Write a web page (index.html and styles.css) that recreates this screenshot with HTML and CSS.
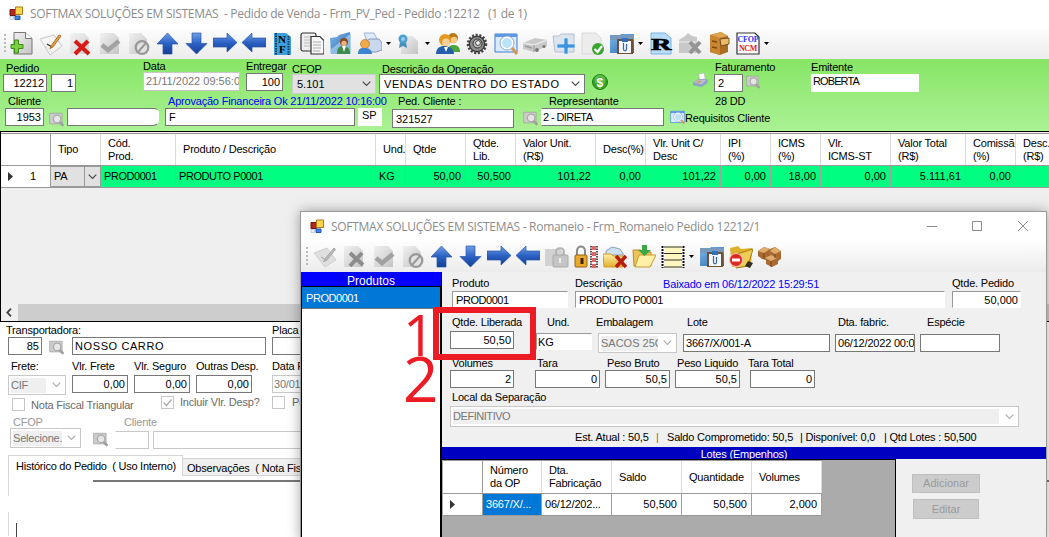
FILE: index.html
```html
<!DOCTYPE html>
<html lang="pt-BR">
<head>
<meta charset="utf-8">
<title>Pedido de Venda</title>
<link rel="stylesheet" href="styles.css">
</head>
<body>
<svg class="sprite" aria-hidden="true">
  <defs>
    <linearGradient id="blue" x1="0" y1="0" x2="0" y2="1"><stop offset="0" stop-color="#6f9fe6"/><stop offset=".5" stop-color="#2c62c4"/><stop offset="1" stop-color="#123f94"/></linearGradient>
    <linearGradient id="fold" x1="0" y1="0" x2="1" y2="1"><stop offset="0" stop-color="#7fb8e8"/><stop offset="1" stop-color="#2766b0"/></linearGradient>
    <linearGradient id="gold" x1="0" y1="0" x2="0" y2="1"><stop offset="0" stop-color="#fff0a8"/><stop offset="1" stop-color="#e3b02e"/></linearGradient>
    <linearGradient id="gry" x1="0" y1="0" x2="1" y2="1"><stop offset="0" stop-color="#f1f1f1"/><stop offset="1" stop-color="#c4c4c4"/></linearGradient>
  </defs>
  <symbol id="app" viewBox="0 0 14 14"><path d="M1 3.500h5.500v6H1z" fill="#b3261a" stroke="#6d1710"/><path d="M6.500 1h7v7.500h-7z" fill="#ffd34a" stroke="#a87a18"/><path d="M6 10h5v3.500H6z" fill="#3f82e8" stroke="#1e56ad"/><path d="M1 10.500h3.500v3H1z" fill="#e8eefa" stroke="#a6b4cc" stroke-width=".6"/></symbol>
  <symbol id="new" viewBox="0 0 24 24"><path d="M4 .5h11.500l6.500 6V22H4z" fill="url(#gry)" stroke="#777"/><path d="M15.500.5v6H22" fill="#fff" stroke="#777"/><path d="M4.500 8h4v4.500H13v4H8.500V21h-4v-4.500H1v-4h3.500z" fill="#79cf3e" stroke="#398a17"/></symbol>
  <symbol id="edit" viewBox="0 0 24 24"><path d="M1 7l14-4 8 11-12 9z" fill="#f6f6f6" stroke="#c6c6c6"/><path d="M1 7l3 5 9 8" fill="none" stroke="#ddd"/><path d="M8 12l5 3" stroke="#333" stroke-width="1.300"/><path d="M12 14L20 3l2 1-8 11-3 1.500z" fill="#eda546" stroke="#9a5212" stroke-width=".8"/></symbol>
  <symbol id="editg" viewBox="0 0 24 24"><path d="M1 8l13-5 9 12-11 7z" fill="#dedede" stroke="#cfcfcf"/><path d="M8 12l5 3M12 14L21 3l1.500 1.500-9 11-3 1z" fill="#bbb" stroke="#a5a5a5"/></symbol>
  <symbol id="del" viewBox="0 0 24 24"><path d="M2 1h14l5 5v16H2z" fill="url(#gry)" opacity=".75"/><path d="M7 9l14 13M20 9L7 22" stroke="#d51c16" stroke-width="4"/></symbol>
  <symbol id="delg" viewBox="0 0 24 24"><path d="M2 1h14l5 5v16H2z" fill="url(#gry)"/><path d="M8 8l13 12M20 8L8 21" stroke="#8c8c8c" stroke-width="4"/></symbol>
  <symbol id="ok" viewBox="0 0 24 24"><path d="M3 1h14l5 5v16H3z" fill="url(#gry)"/><path d="M5 13l6 5L22 9" fill="none" stroke="#a2a2a2" stroke-width="4.500"/></symbol>
  <symbol id="ban" viewBox="0 0 24 24"><path d="M3 1h12l6 6v15H3z" fill="url(#gry)"/><circle cx="16" cy="15.500" r="6.300" fill="#e2e2e2" stroke="#999" stroke-width="2.300"/><path d="M12 20l8-9" stroke="#999" stroke-width="2"/></symbol>
  <symbol id="up" viewBox="0 0 24 24"><path d="M12.500 1L23 12h-6v10H8V12H2z" fill="url(#blue)" stroke="#2856ab" stroke-width=".7"/></symbol>
  <symbol id="down" viewBox="0 0 24 24"><path d="M12.500 22L23 11.500h-6V1H8v10.500H2z" fill="url(#blue)" stroke="#2856ab" stroke-width=".7"/></symbol>
  <symbol id="right" viewBox="0 0 24 24"><path d="M24 10.500L14 1v5H0v9h14v5z" fill="url(#blue)" stroke="#2856ab" stroke-width=".7"/></symbol>
  <symbol id="left" viewBox="0 0 24 24"><path d="M0 10.500L10 1v5h14v9H10v5z" fill="url(#blue)" stroke="#2856ab" stroke-width=".7"/></symbol>
  <symbol id="nf" viewBox="0 0 24 24"><path d="M3 1h12l5 4v18H3z" fill="#3d9ede"/><path d="M5 1v22M17.500 4v19" stroke="#143850" stroke-width="2" stroke-dasharray="1.500 1"/><text x="7" y="11" class="ic-nf">N</text><text x="8" y="21" class="ic-nf">F</text></symbol>
  <symbol id="pages" viewBox="0 0 24 24"><rect x="1" y="1" width="15" height="18" rx="2" fill="#eee" stroke="#333" stroke-width="1.200"/><path d="M4 5h8M4 8h6M4 11h6M4 14h6" stroke="#bbb"/><path d="M11 4.500h9l4 4V22H11z" fill="#f7f7f7" stroke="#333" stroke-width="1.200"/><path d="M13 10h8M13 13h8M13 16h8M13 19h7" stroke="#aaa"/></symbol>
  <symbol id="person" viewBox="0 0 24 24"><path d="M1 6l7-1 2-2 11-3v22H2z" fill="url(#fold)"/><path d="M1 18L22 1v21H2z" fill="#9bc8ee" opacity=".8"/><path d="M8 22c0-6 2-8 6-8s7 2 7 8z" fill="#3d8a4c"/><path d="M13 14l2 6 2-6z" fill="#fff"/><circle cx="15" cy="10" r="4" fill="#8a4a20"/><circle cx="15" cy="11.500" r="2.700" fill="#eab27e"/></symbol>
  <symbol id="pprint" viewBox="0 0 24 24"><path d="M6 1h10l4 8H9z" fill="#dceafa" stroke="#9eb6d4"/><path d="M8 9l4-2h9l3 4v7l-6 2H8z" fill="#c9d8ee" stroke="#8798b8"/><circle cx="7" cy="12" r="4.500" fill="#edaa4c" stroke="#b56b18" stroke-width=".6"/><path d="M0 22c0-5 2-6 6-6s8 1 8 6z" fill="#3f83d0"/></symbol>
  <symbol id="cert" viewBox="0 0 24 24"><path d="M4 4h11l6 5v13H4z" fill="url(#gry)"/><path d="M3 10l-1 6 4-2 4 2-1-6z" fill="#4a8fb8"/><circle cx="6" cy="7" r="4.500" fill="#4a9fd0"/><circle cx="6" cy="7" r="2" fill="#9ccbe5"/></symbol>
  <symbol id="users" viewBox="0 0 24 24"><circle cx="17" cy="6" r="5" fill="#b97918"/><circle cx="18" cy="8" r="3.300" fill="#f5c988"/><path d="M12 20c0-6 2-7 6-7s6 3 6 7z" fill="#4aa63c"/><circle cx="9" cy="8" r="6" fill="#e2991e"/><circle cx="10" cy="10.500" r="3.900" fill="#f8cf94"/><path d="M0 22c0-6 4-8 8-8s10 2 10 8z" fill="#245fae"/><path d="M8 15l2 5 2-5z" fill="#fff"/></symbol>
  <symbol id="gear" viewBox="0 0 24 24"><circle cx="12" cy="12" r="8.500" fill="#777" stroke="#444" stroke-width="3.500" stroke-dasharray="2 1.500"/><circle cx="12" cy="12" r="7.500" fill="#8c8c8c" stroke="#333"/><circle cx="12.500" cy="11.500" r="4.500" fill="#bbb" stroke="#333" stroke-width="1"/><circle cx="13" cy="11" r="2.400" fill="#f4f4f4" stroke="#444"/></symbol>
  <symbol id="find" viewBox="0 0 24 24"><path d="M1 2h22v18H1z" fill="#d9ecfd" stroke="#3c7ed4"/><path d="M1 2h22v3H1z" fill="#5a97e6"/><circle cx="13" cy="11" r="6" fill="#b8e3f8" stroke="#fff" stroke-width="2"/><circle cx="13" cy="11" r="7" fill="none" stroke="#90a8c4"/><path d="M18 16l5 6" stroke="#d19a50" stroke-width="3"/></symbol>
  <symbol id="findg" viewBox="0 0 24 24"><path d="M1 2h20v17H1z" fill="#ccc" stroke="#999"/><circle cx="13" cy="11" r="6" fill="#e6e6e6" stroke="#aaa" stroke-width="2"/><path d="M17 16l6 6" stroke="#a0a0a0" stroke-width="4"/></symbol>
  <symbol id="truck" viewBox="0 0 24 24"><path d="M0 11l12-5 12 2v6l-13 6-11-3z" fill="#c9c9c9"/><path d="M0 11l11 2 13-5" fill="none" stroke="#e6e6e6" stroke-width="1.500"/><path d="M11 13v7" stroke="#999"/><path d="M2 14l7 2" stroke="#999" stroke-width="1.500"/><circle cx="14" cy="18" r="1.900" fill="#777"/><circle cx="21" cy="14.500" r="1.600" fill="#777"/></symbol>
  <symbol id="fplus" viewBox="0 0 24 24"><path d="M1 4h6l2-2h13v18H3z" fill="#dbe4ef" stroke="#b4c0d0"/><path d="M12 6h4v6h7v4h-7v6h-4v-6H5v-4h7z" fill="#3f93dc" stroke="#d9efff" stroke-width=".7"/></symbol>
  <symbol id="pok" viewBox="0 0 24 24"><path d="M1 1h14l5 5v16H1z" fill="#ececec" stroke="#d8d8d8"/><circle cx="17" cy="17" r="6" fill="#38a52d"/><path d="M13.500 17l3 3 4.500-6" fill="none" stroke="#fff" stroke-width="2.200"/></symbol>
  <symbol id="clip" viewBox="0 0 24 24"><path d="M0 3h10l1-1h13v19H0z" fill="url(#fold)"/><path d="M0 3h24v5H0z" fill="#769abe"/><path d="M7 7h16v15H7z" fill="#6d5238"/><path d="M9 9h12v12H9z" fill="#f5f8ff"/><path d="M12 6h6v4h-6z" fill="#2f6fc0"/><path d="M13.500 11v6c0 2.500 3 2.500 3 0v-5" fill="none" stroke="#38649c" stroke-width="1.200"/></symbol>
  <symbol id="r" viewBox="0 0 24 24"><path d="M2 1h14l6 5v16H2z" fill="#b8dcf7" stroke="#79b4e0"/><text x="2" y="18" class="ic-r" textLength="20" lengthAdjust="spacingAndGlyphs">R</text></symbol>
  <symbol id="boxg" viewBox="0 0 24 24"><path d="M1 8l6-4 3-3 4 3 5 1v16H1z" fill="#c8c8c8"/><path d="M1 10h18" stroke="#eee"/><path d="M12 10l10 11M22 10L12 21" stroke="#949494" stroke-width="4"/></symbol>
  <symbol id="cab" viewBox="0 0 24 24"><path d="M3 3l11-3 7 4v16l-8 3-10-3z" fill="#a96c20"/><path d="M3 3l10 3v17L3 20z" fill="#c98630"/><path d="M3 3l11-3 7 4-8 2z" fill="#dca550"/><path d="M13 7l9-1v6l-8 2z" fill="#e9ba68" stroke="#6a3c0c" stroke-width=".8"/><path d="M5 9l5 1M5 15l5 1" stroke="#7b4811" stroke-width="1.500"/></symbol>
  <symbol id="cfop" viewBox="0 0 24 24"><path d="M1 1h18l4 4v17H1z" fill="#fff" stroke="#333" stroke-width="1.200"/><text x="1.500" y="9.500" class="ic-c" fill="#1c3cff" textLength="21">CFOP</text><text x="3" y="19" class="ic-c" fill="#e3161a" textLength="18">NCM</text></symbol>
  <symbol id="locg" viewBox="0 0 24 24"><path d="M0 4h15l3 3v14H0z" fill="#d2d2d2"/><path d="M11 10V7c0-5 8-5 8 0v3" fill="none" stroke="#b5b5b5" stroke-width="2"/><rect x="8" y="10" width="15" height="12" rx="1" fill="#c5c5c5" stroke="#aaa"/><path d="M15 13v5" stroke="#eee" stroke-width="2"/></symbol>
  <symbol id="lock" viewBox="0 0 24 24"><path d="M3 11V6c0-6 8-6 8 0v5" fill="none" stroke="#888" stroke-width="2"/><rect x="1" y="10" width="12" height="12" rx="1" fill="#e9a92c" stroke="#976411"/><path d="M8 13v6" stroke="#3a2508" stroke-width="3"/><path d="M17 1v22M23 1v22" stroke="#222" stroke-width="1.500" stroke-dasharray="1.500 1"/><path d="M20 1v22" stroke="#d66" stroke-width="4" stroke-dasharray="4 2"/></symbol>
  <symbol id="fdel" viewBox="0 0 24 24"><path d="M3 6l6-4 8 2 4 6H3z" fill="#cfe0ef" stroke="#8aa3bb"/><path d="M0 9h8l2 2h10v11H1z" fill="url(#gold)" stroke="#d39a20"/><path d="M13 11l10 11M23 11L13 22" stroke="#b81d12" stroke-width="3.500"/></symbol>
  <symbol id="fdown" viewBox="0 0 24 24"><path d="M1 5h8l2 2h8v14H2z" fill="#ecc557" stroke="#b88b25"/><path d="M3 22l4-12h17l-6 12z" fill="#fff0a8" stroke="#c79c35"/><path d="M10 0h5v5h4l-6.500 6L6 5h4z" fill="#39a845"/></symbol>
  <symbol id="list" viewBox="0 0 24 24"><path d="M1.500 1v22M22.500 1v22" stroke="#111" stroke-width="2" stroke-dasharray="2 1"/><path d="M4 1h16v22H4z" fill="#fdf7bf"/><path d="M3 2h18M3 8.500h18M3 15h18M3 22h18" stroke="#333" stroke-width="1"/></symbol>
  <symbol id="fno" viewBox="0 0 24 24"><path d="M1 3l8-2 3 3 11-1-1 17-19 2z" fill="#deb02c"/><path d="M8 9l16-5-5 17-12 2z" fill="#f1cc55" stroke="#a67a12"/><path d="M19 16l5 2-3 5-5-2z" fill="#342f20"/><circle cx="7" cy="15" r="6.500" fill="#db2b24" stroke="#f8c3be"/><path d="M3 15h8" stroke="#fff" stroke-width="3"/></symbol>
  <symbol id="boxes" viewBox="0 0 24 24"><path d="M0 6l6-4 6 2 5-2 6 4v8l-3 2v3l-6 3-6-3v-4l-4-1-4-3z" fill="#a96a31"/><path d="M0 6l6-4 6 2-6 4zM12 6l5-4 6 4-6 3zM7 13l6-3 6 3-6 3z" fill="#dfaa6e"/><path d="M6 8v6M17 9v4M13 16v6" stroke="#7b451b"/></symbol>
  <symbol id="money" viewBox="0 0 16 16"><circle cx="8" cy="8" r="7.500" fill="#33a429" stroke="#1d7c17"/><circle cx="8" cy="6" r="5.500" fill="#6cca5c" opacity=".6"/><text x="4.500" y="12.500" class="ic-m">$</text></symbol>
  <symbol id="calc" viewBox="0 0 16 16"><path d="M6 1l6-1 1 6-6 2z" fill="#fff" stroke="#aaa" stroke-width=".6"/><path d="M0 10l6-4 10 1-1 4-6 4-9-2z" fill="#8fa2c5"/><path d="M1 10l5-3 8 1-5 4z" fill="#b9c4da"/><path d="M3 10l3-2 4 .500-3 2.500z" fill="#cda46b"/></symbol>
  <symbol id="chev" viewBox="0 0 9 6"><path d="M.7.7L4.500 4.500 8.300.7" fill="none" stroke="currentColor" stroke-width="1.100"/></symbol>
</svg>

<main class="app">
  <header class="titlebar"><svg class="appicon"><use href="#app"/></svg><span class="title-main">SOFTMAX SOLUÇÕES EM SISTEMAS&nbsp; - Pedido de Venda - Frm_PV_Ped - Pedido :12212&nbsp;&nbsp; (1 de 1)</span></header>
  <nav class="toolbar">
    <i class="grip"></i>
    <svg><use href="#new"/></svg><svg><use href="#edit"/></svg><svg><use href="#del"/></svg><svg><use href="#ok"/></svg><svg><use href="#ban"/></svg><svg><use href="#up"/></svg><svg><use href="#down"/></svg><svg><use href="#right"/></svg><svg><use href="#left"/></svg><svg><use href="#nf"/></svg><svg><use href="#pages"/></svg><svg><use href="#person"/></svg><svg><use href="#pprint"/></svg><i class="drop"></i><svg><use href="#cert"/></svg><i class="drop"></i><svg><use href="#users"/></svg><svg><use href="#gear"/></svg><svg><use href="#find"/></svg><svg><use href="#truck"/></svg><svg><use href="#fplus"/></svg><svg><use href="#pok"/></svg><svg><use href="#clip"/></svg><i class="drop"></i><svg><use href="#r"/></svg><svg><use href="#boxg"/></svg><svg><use href="#cab"/></svg><svg><use href="#cfop"/></svg><i class="drop"></i>
  </nav>

  <section class="order">
    <div class="row row-a">
      <div class="field a-ped"><label>Pedido</label><b class="in num">12212</b></div>
      <div class="field a-seq"><label></label><b class="in num">1</b></div>
      <div class="field a-data"><label>Data</label><b class="in off">21/11/2022 09:56:00</b></div>
      <div class="field a-ent"><label>Entregar</label><b class="in num">100</b></div>
      <div class="field a-cfop"><label>CFOP</label><b class="in sel shade">5.101<svg class="chev"><use href="#chev"/></svg></b></div>
      <div class="field a-desc"><label>Descrição da Operação</label><b class="in sel wide">VENDAS DENTRO DO ESTADO<svg class="chev"><use href="#chev"/></svg></b></div>
      <svg class="a-money"><use href="#money"/></svg>
      <svg class="a-calc"><use href="#calc"/></svg>
      <div class="field a-fat"><label>Faturamento</label><b class="in">2</b></div>
      <svg class="a-find"><use href="#findg"/></svg>
      <div class="field a-emit"><label>Emitente</label><b class="in bare">ROBERTA</b></div>
    </div>
    <div class="row row-b">
      <div class="field b-cli"><label>Cliente</label><b class="in num">1953</b></div>
      <svg class="lens b-l1"><use href="#findg"/></svg>
      <div class="field b-n1"><label></label><b class="in"></b></div>
      <div class="field b-n2"><label class="info">Aprovação Financeira Ok 21/11/2022 10:16:00</label><b class="in">F</b></div>
      <div class="field b-uf"><label></label><b class="in bare">SP</b></div>
      <div class="field b-pc"><label>Ped. Cliente :</label><b class="in">321527</b></div>
      <svg class="lens b-l2"><use href="#findg"/></svg>
      <div class="field b-rep"><label>Representante</label><b class="in">2 - DIRETA</b></div>
      <svg class="lens b-l3"><use href="#find"/></svg>
      <span class="b-req">Requisitos Cliente</span>
      <span class="b-dd">28 DD</span>
    </div>
  </section>

  <section class="items">
    <div class="cols head">
      <span></span><span>Tipo</span><span>Cód.<br>Prod.</span><span>Produto / Descrição</span><span>Und.</span><span>Qtde</span><span>Qtde.<br>Lib.</span><span>Valor Unit.<br>(R$)</span><span>Desc(%)</span><span>Vlr. Unit C/<br>Desc</span><span>IPI<br>(%)</span><span>ICMS<br>(%)</span><span>Vlr.<br>ICMS-ST</span><span>Valor Total<br>(R$)</span><span>Comissão<br>(%)</span><span>Desc.<br>(R$)</span>
    </div>
    <div class="cols line">
      <span class="rh"><i class="tri"></i>1</span><span class="tipo">PA<i><svg class="chev"><use href="#chev"/></svg></i></span><span class="tight">PROD0001</span><span class="tight">PRODUTO P0001</span><span>KG</span><span class="n">50,00</span><span class="n">50,500</span><span class="n">101,22</span><span class="n">0,00</span><span class="n">101,22</span><span class="n">0,00</span><span class="n">18,00</span><span class="n">0,00</span><span class="n">5.111,61</span><span class="n">0,00</span><span></span>
    </div>
    <div class="hscroll"><svg viewBox="0 0 6 9"><path d="M5 .7L1.300 4.500 5 8.300" fill="none" stroke="#444" stroke-width="1.800"/></svg><i></i></div>
  </section>

  <section class="ship">
    <div class="row row-c">
      <div class="field c-tr"><label>Transportadora:</label><b class="in num">85</b></div>
      <svg class="lens c-l"><use href="#findg"/></svg>
      <div class="field c-nome"><label></label><b class="in wide">NOSSO CARRO</b></div>
      <div class="field c-placa"><label>Placa</label><b class="in"></b></div>
    </div>
    <div class="row row-d">
      <div class="field d-frete"><label>Frete:</label><b class="in sel off"><em>CIF</em><svg class="chev"><use href="#chev"/></svg></b></div>
      <div class="field d-v"><label>Vlr. Frete</label><b class="in num">0,00</b></div>
      <div class="field d-v"><label>Vlr. Seguro</label><b class="in num">0,00</b></div>
      <div class="field d-v"><label>Outras Desp.</label><b class="in num">0,00</b></div>
      <div class="field d-data"><label>Data Prev.</label><b class="in off">30/01/2023</b></div>
    </div>
    <div class="checks">
      <i class="box k1"></i><span class="k1t">Nota Fiscal Triangular</span>
      <i class="box"><svg viewBox="0 0 11 11"><path d="M1.500 5.500l3 3 5-6" fill="none" stroke="#aaa" stroke-width="1.300"/></svg></i><span class="k2t">Incluir Vlr. Desp?</span>
      <i class="box"></i><span class="k3t">Possui</span>
    </div>
    <div class="row row-e">
      <div class="field e-cfop"><label>CFOP</label><b class="in sel off"><em>Selecione.</em><svg class="chev"><use href="#chev"/></svg></b></div>
      <svg class="lens e-l"><use href="#findg"/></svg>
      <div class="field e-cli"><label>Cliente</label><b class="in off"></b></div>
      <div class="field e-nome"><label></label><b class="in off"></b></div>
    </div>
    <div class="tabs"><span class="tab on">Histórico do Pedido&nbsp; ( Uso Interno)</span><span class="tab">Observações&nbsp; ( Nota Fiscal )</span></div>
    <div class="page"><i class="edge-left"></i><i class="edge-top"></i></div>
  </section>
</main>

<aside class="modal">
  <header class="titlebar"><svg class="appicon"><use href="#app"/></svg><span class="title-modal">SOFTMAX SOLUÇÕES EM SISTEMAS - Romaneio - Frm_Romaneio Pedido 12212/1</span>
    <svg class="winctl" viewBox="0 0 104 12"><path d="M1 6.500h10M46.500 1.500h9v9h-9zM92 1l10 10M102 1L92 11" fill="none" stroke="#8c8c8c"/></svg>
  </header>
  <nav class="toolbar">
    <i class="grip"></i>
    <svg><use href="#editg"/></svg><svg><use href="#delg"/></svg><svg><use href="#ok"/></svg><svg><use href="#ban"/></svg><svg><use href="#up"/></svg><svg><use href="#down"/></svg><svg><use href="#right"/></svg><svg><use href="#left"/></svg><svg><use href="#locg"/></svg><svg><use href="#lock"/></svg><svg><use href="#fdel"/></svg><svg><use href="#fdown"/></svg><svg><use href="#list"/></svg><i class="drop"></i><svg><use href="#clip"/></svg><svg><use href="#fno"/></svg><svg><use href="#boxes"/></svg>
  </nav>
  <div class="split">
    <div class="products"><h2>Produtos</h2><div class="pick tight">PROD0001</div></div>
    <div class="detail">
      <div class="row row-m">
        <div class="field m-prod"><label>Produto</label><b class="in inset tight">PROD0001</b></div>
        <div class="field m-desc"><label>Descrição<span class="info">Baixado em 06/12/2022 15:29:51</span></label><b class="in inset tight">PRODUTO P0001</b></div>
        <div class="field m-qtd"><label>Qtde. Pedido</label><b class="in inset num">50,000</b></div>
      </div>
      <div class="row row-n">
        <div class="field n-lib"><label>Qtde. Liberada</label><b class="in num">50,50</b></div>
        <div class="field n-und"><label>Und.</label><b class="in inset">KG</b></div>
        <div class="field n-emb"><label>Embalagem</label><b class="in sel off"><em>SACOS 25G</em><svg class="chev"><use href="#chev"/></svg></b></div>
        <div class="field n-lote"><label>Lote</label><b class="in">3667/X/001-A</b></div>
        <div class="field n-dta"><label>Dta. fabric.</label><b class="in">06/12/2022 00:00</b></div>
        <div class="field n-esp"><label>Espécie</label><b class="in"></b></div>
      </div>
      <div class="row row-o">
        <div class="field o-vol"><label>Volumes</label><b class="in num">2</b></div>
        <div class="field o-tara"><label>Tara</label><b class="in num">0</b></div>
        <div class="field o-pb"><label>Peso Bruto</label><b class="in num">50,5</b></div>
        <div class="field o-pl"><label>Peso Liquido</label><b class="in num">50,5</b></div>
        <div class="field o-tt"><label>Tara Total</label><b class="in num">0</b></div>
      </div>
      <div class="field local"><label>Local da Separação</label><b class="in sel off"><em class="tight">DEFINITIVO</em><svg class="chev"><use href="#chev"/></svg></b></div>
      <p class="stock"><span class="s1">Est. Atual : 50,5</span><i>|</i><span class="s2">Saldo Comprometido: 50,5</span><span class="s3">| Disponível: 0,0</span><span class="s4">| Qtd Lotes : 50,500</span></p>
      <h3>Lotes (Empenhos)</h3>
      <div class="lots">
        <div class="lotgrid">
          <div class="lcols head"><span></span><span>Número<br>da OP</span><span>Dta.<br>Fabricação</span><span>Saldo</span><span>Quantidade</span><span>Volumes</span></div>
          <div class="lcols line"><span class="rh"><i class="tri"></i></span><span class="hot">3667/X/...</span><span>06/12/202...</span><span class="n">50,500</span><span class="n">50,500</span><span class="n">2,000</span></div>
        </div>
        <div class="btns"><button class="add" disabled>Adicionar</button><button class="upd" disabled>Editar</button></div>
      </div>
    </div>
  </div>
</aside>

<i class="mark-box"></i>
<span class="mark one">1</span>
<span class="mark two">2</span>
</body>
</html>
```
FILE: styles.css
```css
* { box-sizing: border-box; }
body { margin: 0; width: 1049px; height: 537px; overflow: hidden; position: relative; background: #fff; color: #000; font: 11px/13px "Liberation Sans", Arial, sans-serif; letter-spacing: -.2px; }
i, b, em { font-style: normal; font-weight: normal; }
svg { display: block; flex: none; }
.sprite { position: absolute; width: 0; height: 0; }
.ic-nf { font: bold 11px "Liberation Serif", serif; }
.ic-r { font: bold 16px "Liberation Serif", serif; stroke: #000; stroke-width: .6; }
.ic-c { font: bold 8px "Liberation Serif", serif; }
.ic-m { font: bold 12px "Liberation Sans", sans-serif; fill: #fff; }

/* window chrome */
.app { display: flex; flex-direction: column; height: 537px; }
.titlebar { display: flex; height: 29px; flex: none; background: #fff; padding: 6px 0 0 9px; color: #8c8c8c; font: 12px/16px "Open Sans", sans-serif; white-space: nowrap; }
.appicon { width: 14px; height: 14px; margin-right: 7px; }
.title-main { letter-spacing: -.3px; }
.title-modal { letter-spacing: -.28px; }
.toolbar { display: flex; gap: 5px; height: 30px; flex: none; padding: 3px 0 0 4px; background: linear-gradient(#fdfdfd, #ececec); }
.toolbar svg { width: 24px; height: 24px; }
.grip { width: 2px; height: 20px; margin: 2px -1px 0 0; background: repeating-linear-gradient(#bbb 0 2px, transparent 2px 4px); }
.drop { width: 5px; height: 3px; margin: 10px 0 0; background: #000; clip-path: polygon(0 0, 100% 0, 50% 100%); transform: translateX(-1px); }

/* fields */
.row { display: flex; align-items: flex-start; }
.field { display: flex; flex-direction: column; flex: none; }
.field label { height: 13px; white-space: nowrap; }
.in { display: block; height: 18px; line-height: 15px; border: 1px solid #777; background: #fff; padding: 1px 3px; white-space: nowrap; overflow: hidden; }
.num { text-align: right; padding-right: 2px; letter-spacing: 0; }
.wide { letter-spacing: .6px; }
.tight { letter-spacing: -.45px; }
.off { border-color: #c8c8c8; color: #777; }
.bare { border-color: #fff; }
.sel { display: flex; align-items: center; justify-content: space-between; padding: 0 4px; height: 20px; }
.sel.off { padding-left: 2px; }
.sel em { background: #efefef; line-height: 15px; height: 15px; overflow: hidden; }
.shade { background: #e1e1e1; border-color: #ccc; }
.chev { width: 9px; height: 6px; color: #444; }
.off .chev { color: #aaa; }
.inset { border-color: #999 #fff #fff #999; height: 17px; line-height: 14px; }
.info { color: #0000ff; }
.lens { width: 15px; height: 15px; }

/* order header */
.order { height: 72px; flex: none; background: linear-gradient(#87e665, #abf195); }
.row-a { height: 36px; }
.row-b { height: 36px; }
.a-ped { width: 44px; margin: 3px 0 0 3px; }
.a-ped label { padding-left: 3px; height: 12px; }
.a-seq { width: 25px; margin: 3px 0 0 4px; }
.a-seq label { height: 12px; }
.a-data { width: 97px; margin: 1px 0 0 67px; }
.a-data .in { height: 19px; padding-left: 2px; letter-spacing: 0; }
.a-ent { width: 37px; margin: 1px 0 0 6px; }
.a-data label { height: 12px; }
.a-cfop { width: 84px; margin: 4px 0 0 9px; }
.a-cfop .in { letter-spacing: 0; }
.a-cfop label, .a-desc label { height: 11px; }
.a-desc label { padding-left: 3px; }
.a-desc { width: 206px; margin: 4px 0 0 3px; }
.a-money { width: 16px; height: 16px; margin: 15px 0 0 7px; }
.a-calc { width: 17px; height: 15px; margin: 14px 0 0 84px; }
.a-fat { width: 29px; margin: 2px 0 0 5px; }
.a-fat label { padding-left: 1px; }
.a-find { width: 14px; height: 14px; margin: 16px 0 0 3px; }
.a-emit { width: 108px; margin: 2px 0 0 51px; }
.a-emit .in { line-height: 13px; padding: 0 1px; letter-spacing: -.9px; }
.b-cli { width: 39px; margin: 0 0 0 5px; }
.b-cli label { padding-left: 3px; }
.b-l1 { margin: 17px 0 0 5px; }
.b-n1 { width: 92px; margin: 0 0 0 3px; }
.b-n1 .in { border-right-color: #fff; border-radius: 0 5px 6px 0; }
.b-n2 { width: 190px; margin: 0 0 0 6px; }
.b-n2 label { padding-left: 3px; }
.b-uf { width: 24px; margin: 0 0 0 3px; }
.b-uf .in { line-height: 13px; padding-top: 0; }
.b-pc { width: 122px; margin: 0 0 0 10px; }
.b-pc label { padding-left: 6px; }
.b-pc .in { margin-top: 1px; height: 19px; line-height: 17px; letter-spacing: 0; }
.b-l2 { margin: 16px 0 0 9px; }
.b-rep { width: 123px; margin: 0 0 0 3px; }
.b-rep label { padding-left: 8px; }
.b-rep .in { padding-left: 1px; border-left-color: #fff; letter-spacing: -.6px; }
.b-l3 { margin: 15px 0 0 6px; }
.b-req { margin: 17px 0 0; width: 30px; white-space: nowrap; }
.b-dd { white-space: nowrap; }

/* item grid */
.items { height: 191px; flex: none; border: 1px solid #000; border-width: 1px 0 1px 1px; background: #efefef; display: flex; flex-direction: column; padding-top: 1px; overflow: hidden; }
.cols { display: grid; grid-template-columns: 50px 50px 75px 200px 30px 60px 50px 80px 50px 75px 50px 50px 70px 75px 50px 75px; flex: none; width: 1090px; }
.head { background: #fff; }
.head span { display: flex; align-items: center; padding-left: 7px; border-right: 1px solid #dcdcdc; white-space: nowrap; overflow: hidden; }
.cols.head { height: 32px; border-top: 1px solid #999; }
.cols.head span:first-child { border-right-color: #999; }
.line { border: 1px solid #999; border-width: 1px 0; }
.cols.line { height: 23px; background: #00ff80; }
.line > span { display: flex; align-items: center; padding-left: 3px; border-right: 1px solid #a0a0a0; white-space: nowrap; overflow: hidden; }
.line > .n { justify-content: flex-end; padding: 0 4px 0 0; letter-spacing: 0; }
.line > .rh { background: #fff; padding-left: 7px; gap: 17px; }
.line > .tipo { background: #e1e1e1; border: 1px solid #999; border-left: 0; justify-content: space-between; }
.tipo i { align-self: stretch; display: flex; align-items: center; border-left: 1px solid #999; padding: 0 3px; }
.tri { width: 5px; height: 9px; background: #333; clip-path: polygon(0 0, 100% 50%, 0 100%); }
.hscroll { display: flex; margin-top: auto; height: 17px; background: #f0f0f0; align-items: center; flex: none; }
.hscroll svg { width: 6px; height: 9px; margin: 0 6px 0 5px; }
.hscroll i { flex: 1; align-self: stretch; background: #cdcdcd; }

/* shipping */
.ship { flex: 1; background: #fff; }
.row-c { height: 38px; padding-top: 2px; }
.c-tr { width: 34px; margin-left: 8px; }
.c-tr label { margin-left: -2px; }
.c-l { margin: 16px 0 0 7px; }
.c-nome { width: 194px; margin-left: 8px; }
.c-nome .in { padding-left: 2px; }
.c-placa { width: 60px; margin-left: 6px; }
.row-d { height: 36px; }
.row-d label { height: 15px; }
.d-frete { width: 58px; margin-left: 8px; }
.d-frete label { padding-left: 3px; }
.d-frete em { width: 35px; }
.d-v { width: 56px; margin-left: 6px; }
.d-data { width: 60px; margin-left: 20px; }
.d-data .in { padding-left: 1px; }
.checks { display: flex; height: 20px; color: #6a6a6a; white-space: nowrap; }
.box { width: 13px; height: 13px; border: 1px solid #c6c6c6; flex: none; }
.box.k1 { margin: 2px 0 0 12px; }
.k1t { width: 130px; margin: 3px 0 0 6px; }
.k2t { width: 92px; margin: 0 0 0 6px; }
.k3t { margin-left: 7px; }
.row-e { height: 39px; color: #999; }
.row-e label { height: 12px; }
.e-cfop { width: 71px; margin-left: 10px; }
.e-cfop label { padding-left: 3px; }
.e-cfop em { width: 49px; }
.e-l { margin: 16px 0 0 12px; }
.e-cli { width: 34px; margin-left: 7px; }
.e-cli .in, .e-nome .in { margin-top: 3px; }
.e-cli label { padding-left: 9px; }
.e-cli .in { border-left-color: #fff; }
.e-nome { width: 190px; margin-left: 4px; }
.tabs { display: flex; align-items: flex-end; height: 21px; margin-left: 8px; }
.tab { height: 18px; border: 1px solid #d5d5d5; border-left: 0; background: #f0f0f0; padding: 3px 0 0 4px; width: 180px; white-space: nowrap; }
.tab.on { height: 21px; width: 175px; padding: 4px 0 0 7px; background: #fff; border-left: 1px solid #d5d5d5; border-bottom: 0; letter-spacing: -.25px; }
.page { height: 60px; margin-left: 8px; display: flex; padding: 4px 0 0 6px; border-left: 1px solid #d9d9d9; border-image: linear-gradient(#d9d9d9 20px, #fff 20px 36px, #d9d9d9 36px) 1; border-width: 0 0 0 1px; border-style: solid; }
.edge-top { flex: 1; margin-left: 76px; height: 2px; background: #777; }
.edge-left { width: 1px; height: 14px; margin: 43px 0 0 1px; background: #444; }

/* romaneio window */
.modal { position: absolute; left: 300px; top: 211px; width: 747px; height: 330px; border: 1px solid #999; background: #f0f0f0; box-shadow: 0 0 12px rgba(0,0,0,.35); }
.modal .titlebar { height: 30px; padding: 7px 0 0 9px; }
.winctl { width: 104px; height: 12px; margin: 1px 16px 0 auto; }
.modal .toolbar { padding-left: 5px; }
.modal .grip { margin-right: 0; }
.split { display: flex; height: 270px; }
.products { width: 141px; flex: none; background: #fff; border: 1px solid #000; border-width: 0 2px 0 1px; }
h2, h3 { margin: 0; font-weight: normal; text-align: center; color: #fff; }
.products h2 { background: #0000ff; height: 15px; line-height: 18px; font-size: 12px; letter-spacing: 0; border-bottom: 1px solid #000; overflow: hidden; margin-left: -1px; margin-right: -1px; }
.pick { height: 22px; line-height: 22px; background: #0078d7; color: #fff; padding-left: 4px; border: 1px solid #777; border-width: 0 0 1px; }
.detail { flex: 1; }
.row-m { height: 44px; padding-top: 5px; }
.row-m label { height: 14px; }
.m-prod { width: 116px; margin-left: 10px; }
.m-desc { width: 370px; margin-left: 7px; }
.m-desc label { display: flex; }
.m-desc .info { margin: 1px 0 0 41px; }
.m-qtd { width: 69px; margin-left: 7px; }
.row-n { height: 41px; }
.n-lib { width: 64px; margin-left: 8px; }
.n-lib label { height: 15px; padding-left: 2px; }
.n-und { width: 56px; margin-left: 22px; }
.n-und label { height: 17px; padding-left: 11px; }
.n-und .in { padding-left: 1px; }
.n-emb { width: 79px; margin-left: 6px; }
.n-emb label { height: 17px; margin-left: -2px; }
.n-emb em { width: 57px; letter-spacing: 0; }
.n-lote { width: 147px; margin-left: 6px; }
.n-lote label { padding-left: 4px; }
.n-lote .in, .n-dta .in { padding-left: 2px; }
.n-dta { width: 80px; margin-left: 5px; }
.n-dta label { padding-left: 3px; }
.n-esp { width: 80px; margin-left: 5px; }
.n-esp label { padding-left: 7px; }
.n-lote label, .n-dta label, .n-esp label { height: 18px; }
.row-o { height: 34px; }
.row-o label { padding-left: 2px; height: 13px; }
.row-o .field { width: 65px; }
.row-o .o-vol { width: 64px; margin: -1px 0 0 8px; }
.row-o .o-vol label { height: 14px; padding-top: 1px; }
.o-tara { margin-left: 21px; }
.o-pb { margin-left: 5px; }
.o-pl { margin-left: 5px; }
.o-tt { margin-left: 10px; }
.row-o .o-tt label { padding: 0; margin-left: -2px; }
.local { width: 569px; margin-left: 8px; }
.local label { height: 15px; padding-left: 2px; }
.local .in { height: 21px; }
.local em { width: 546px; }
.stock { display: flex; margin: 4px 0 0 133px; height: 16px; white-space: nowrap; }
.s1 { width: 81px; }
.stock i { color: #a60; width: 11px; }
.s2 { width: 133px; }
.s3 { width: 84px; }
h3 { background: #0000c0; height: 12px; line-height: 15px; font-size: 11px; overflow: hidden; }
.lots { display: flex; height: 90px; margin-left: -1px; }
.lotgrid { width: 455px; background: #ababab; border: 1px solid #000; padding-left: 1px; }
.lcols { display: grid; grid-template-columns: 40px 59px 70px 70px 70px 70px; width: 379px; }
.lcols.head { height: 33px; border-top: 1px solid #999; }
.lcols.head span:first-child { border-right-color: #999; }
.lcols.line { height: 23px; background: #fff; }
.line > .hot { background: #0078d7; color: #fff; }
.btns { display: flex; flex-direction: column; gap: 6px; padding: 15px 0 0 16px; }
.btns button { font: inherit; padding: 0; color: #9a9a9a; background: #ccc; border: 1px solid #bfbfbf; }
.btns .add { width: 68px; height: 19px; }
.btns .upd { width: 66px; height: 20px; margin-left: 1px; }

/* step callouts */
.mark-box { position: absolute; left: 433px; top: 307px; width: 103px; height: 53px; border: 6px solid #ed1c24; }
.mark { position: absolute; color: #ed1c24; font-family: "Open Sans", sans-serif; line-height: 1; }
.one { left: 403px; top: 306px; font-size: 56px; }
.two { left: 403px; top: 347px; font-size: 62px; }
```
